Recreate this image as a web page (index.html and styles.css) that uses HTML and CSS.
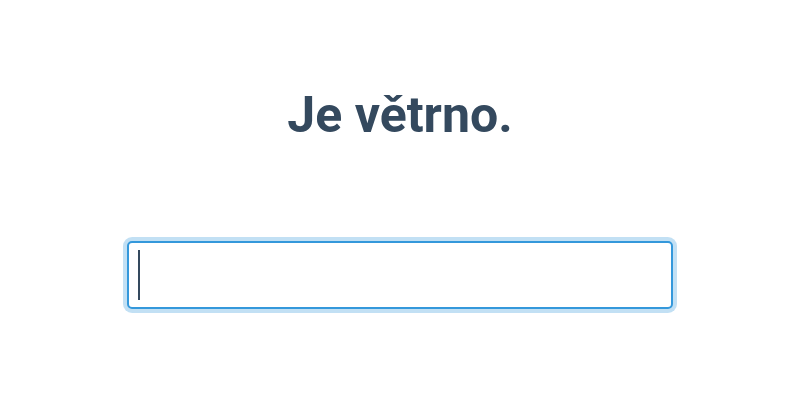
FILE: index.html
```html
<!DOCTYPE html>
<html lang="cs">
<head>
  <meta charset="UTF-8">
  <title>Je větrno.</title>
  <link rel="stylesheet" href="styles.css">
</head>
<body>
  <div id="app">
    <h1 id="sentence">Je větrno.</h1>
    <div id="answerBox">
      <input id="answer" type="text" autocomplete="off">
      <span id="caret"></span>
    </div>
  </div>
</body>
</html>
```

FILE: styles.css
```css
body {
  margin: 0;
  padding: 0;
  font-family: Roboto, 'Noto Sans', sans-serif;
  background: #fff;
}

#app {
  display: flex;
  flex-direction: column;
  align-items: center;
  padding-top: 83px;
}

#sentence {
  margin: 0;
  font-size: 50px;
  font-weight: 700;
  line-height: 64px;
  color: #34495e;
}

#answerBox {
  position: relative;
  margin-top: 90px;
  padding: 4px;
  border-radius: 9px;
  background: rgba(52, 152, 219, 0.3);
}

#answer {
  display: block;
  width: 546px;
  height: 68px;
  box-sizing: border-box;
  padding: 0 10px;
  border: 2px solid #3498db;
  border-radius: 5px;
  outline: none;
  background: #fff;
  font-family: Roboto, sans-serif;
  font-size: 36px;
  color: #34495e;
}

/* caret drawn by hand so it shows in the screenshot */
#caret {
  position: absolute;
  left: 15px;
  top: 13px;
  width: 2px;
  height: 50px;
  background: #34495e;
}
```
